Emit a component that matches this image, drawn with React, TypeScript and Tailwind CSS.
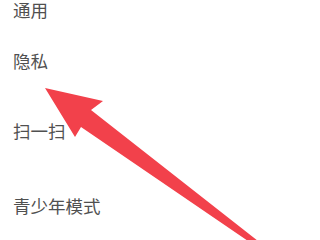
import React from "react";

export default function App() {
  const items = [
    { label: "通用", cls: "mt-[1px]" },
    { label: "隐私", cls: "mt-[34px]" },
    { label: "扫一扫", cls: "mt-[53px]" },
    { label: "青少年模式", cls: "mt-[58px]" },
  ];
  return (
    <div className="relative w-[320px] h-[240px] overflow-hidden bg-white">
      <div
        className="flex flex-col pl-[13px] text-[17.5px] leading-[17px] text-[#505050]"
        style={{ fontFamily: '"Noto Sans CJK SC", "Noto Sans", sans-serif' }}
      >
        {items.map((it) => (
          <div key={it.label} className={it.cls}>
            {it.label}
          </div>
        ))}
      </div>
      <svg
        className="absolute left-0 top-0"
        width="320"
        height="240"
        viewBox="0 0 320 240"
      >
        <polygon
          points="45,88 103,101 91,110 258,241 248,241 81,127 75,137"
          fill="#f2414b"
        />
      </svg>
    </div>
  );
}
